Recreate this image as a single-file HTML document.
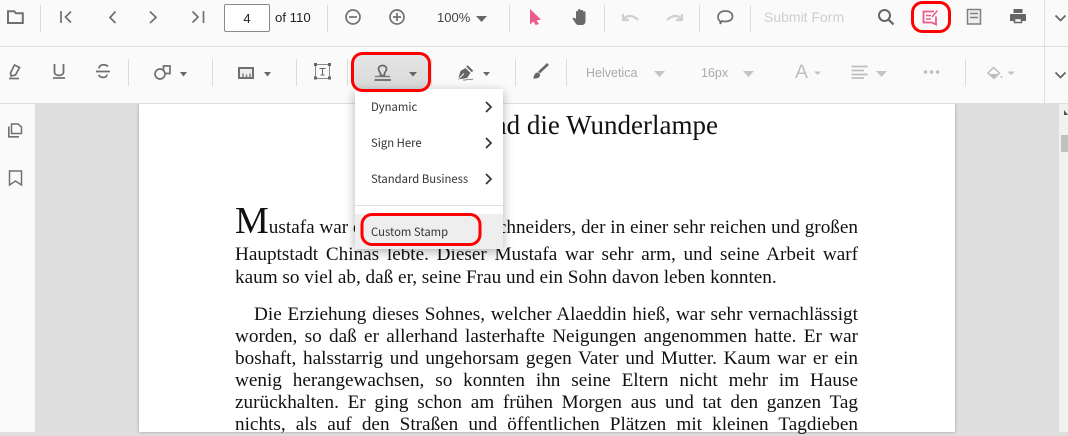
<!DOCTYPE html>
<html><head><meta charset="utf-8">
<style>
html,body{margin:0;padding:0;width:1068px;height:432px;overflow:hidden;background:#dedede;font-family:"Liberation Sans",sans-serif}
.a{position:absolute}
.tb{left:0;width:1068px;background:#fafafa}
.t{position:absolute;white-space:nowrap;font-size:13px;color:#444;line-height:16px}
.l{position:absolute;left:235px;width:623px;font-family:"Liberation Serif",serif;font-size:19.2px;line-height:22px;height:22px;color:#111;text-align:justify;text-align-last:justify;white-space:nowrap}
.m{position:absolute;left:371px;font-family:"Noto Sans CJK SC","Liberation Sans",sans-serif;font-size:11.3px;color:#333;line-height:14px;white-space:nowrap}
svg{position:absolute;left:0;top:0}
</style></head><body>
<div class="a" style="left:35px;top:104px;width:1024px;height:328px;background:#dedede"></div>
<div class="a" style="left:139px;top:104px;width:816px;height:328px;background:#fff;box-shadow:0 0 3px rgba(0,0,0,.3)"></div>
<div class="a" style="left:0;top:104px;width:35px;height:328px;background:#fafafa"></div>
<div class="a" style="left:1059px;top:104px;width:9px;height:328px;background:#f1f1f1"></div>
<div class="a" style="left:1061px;top:135px;width:7px;height:17px;background:#c1c1c1"></div>

<div class="a" style="left:300px;top:110px;width:418px;text-align:right;font-family:'Liberation Serif',serif;font-size:27px;line-height:30px;color:#111;white-space:nowrap">Aladdin und die Wunderlampe</div>
<div class="l" style="top:210px;text-align-last:left;width:auto"><span style="font-size:38px;line-height:22px">M</span>ustafa war der Sohn</div>
<div class="l" style="top:217px;left:400px;width:458px;text-align:right;text-align-last:right">Schneiders, der in einer sehr reichen und großen</div>
<div class="l" style="top:244px">Hauptstadt Chinas lebte. Dieser Mustafa war sehr arm, und seine Arbeit warf</div>
<div class="l" style="top:267px;text-align-last:left">kaum so viel ab, daß er, seine Frau und ein Sohn davon leben konnten.</div>
<div class="l" style="top:304px;left:254px;width:604px">Die Erziehung dieses Sohnes, welcher Alaeddin hieß, war sehr vernachlässigt</div>
<div class="l" style="top:326px">worden, so daß er allerhand lasterhafte Neigungen angenommen hatte. Er war</div>
<div class="l" style="top:348px">boshaft, halsstarrig und ungehorsam gegen Vater und Mutter. Kaum war er ein</div>
<div class="l" style="top:370px">wenig herangewachsen, so konnten ihn seine Eltern nicht mehr im Hause</div>
<div class="l" style="top:392px">zurückhalten. Er ging schon am frühen Morgen aus und tat den ganzen Tag</div>
<div class="l" style="top:414px">nichts, als auf den Straßen und öffentlichen Plätzen mit kleinen Tagdieben</div>

<div class="a tb" style="top:0;height:46px"></div>
<div class="a" style="left:0;top:46px;width:1068px;height:1px;background:#e0e0e0"></div>
<div class="a tb" style="top:47px;height:56px"></div>
<div class="a" style="left:0;top:103px;width:1068px;height:1px;background:#e0e0e0"></div>
<div class="a" style="left:1044px;top:0;width:1px;height:103px;background:#e0e0e0"></div>

<div class="a" style="left:352px;top:54px;width:77px;height:37px;background:linear-gradient(#e6e6e6,#d8d8d8);border-radius:8px"></div>

<div class="a" style="left:224px;top:4px;width:44px;height:26px;border:1px solid #8a8a8a;border-radius:2px;background:#fff;text-align:center;font-size:13px;line-height:27px;color:#222">4</div>
<div class="t" style="left:275px;top:10px;color:#222;font-size:13.2px">of 110</div>
<div class="t" style="left:437px;top:10px;color:#444">100%</div>
<div class="t" style="left:764px;top:9px;color:#cfcfcf;font-size:14px">Submit Form</div>
<div class="t" style="left:586px;top:65px;color:#ababab;font-size:12.5px">Helvetica</div>
<div class="t" style="left:701px;top:65px;color:#ababab;font-size:12.5px">16px</div>
<div class="t" style="left:795px;top:62px;color:#bdbdbd;font-size:19.5px;line-height:20px">A</div>

<div class="a" style="left:355px;top:89px;width:148px;height:160px;background:#fff;box-shadow:0 3px 10px rgba(0,0,0,.3)"></div>
<div class="a" style="left:355px;top:205px;width:148px;height:1px;background:#e0e0e0"></div>
<div class="a" style="left:355px;top:214px;width:148px;height:35px;background:#eee"></div>
<div class="m" style="top:100px">Dynamic</div>
<div class="m" style="top:136px">Sign Here</div>
<div class="m" style="top:172px">Standard Business</div>
<div class="m" style="top:225px">Custom Stamp</div>

<svg width="1068" height="432" viewBox="0 0 1068 432" fill="none">
<g stroke="#dcdcdc" stroke-width="1">
<path d="M40.500 5V32M327.500 5V32M509.500 5V32M604.500 5V32M699.500 5V32M750.500 5V32"/>
<path d="M128.500 59V86M212.500 59V86M296.500 59V86M347.500 59V86M431.500 59V86M515.500 59V86M566.500 59V86M965.500 59V86"/>
</g>
<g stroke="#707070" stroke-width="1.700">
<path d="M8 23V11.200h6l2 2h6.800V23z" stroke-width="2"/>
<path d="M61 11V23M71 11.500L65.500 17L71 22.500"/>
<path d="M115.500 11.500L110 17.500L115.500 23"/>
<path d="M150 11.500L156 17.500L150 23"/>
<path d="M192.500 11.500L198 17L192.500 22.500M203.500 11V23"/>
<circle cx="353" cy="17" r="7"/><path d="M349 17H357"/>
<circle cx="397" cy="17" r="7"/><path d="M393 17H401M397 13V21"/>
</g>
<path d="M476 16H487L481.500 22z" fill="#666"/>
<path d="M530 9L541 19.500L536.500 20.500L539 24L535.500 25L533.500 21.500L530 24.500z" fill="#ea5a8c"/>
<!-- hand -->
<path d="M572.500 18.500C573.500 17 575 18 576 19V12C576 10.500 578 10.500 578 12V10C578 8.800 580.500 8.800 580.500 10V11C580.500 9.500 583 9.500 583 11V12C583 11 585.500 11 585.500 12.500V21C585.500 23.500 584 25 582 25H578.500C577 25 576 24 575 22.500z" fill="#6a6a6a"/>
<path d="M623 21C625 15 632 14 638 20M623 14V20H629" stroke="#d0d0d0" stroke-width="2.200"/>
<path d="M682 21C680 15 673 14 667 20M682 14V20H676" stroke="#d0d0d0" stroke-width="2.200"/>
<!-- comment -->
<path d="M720.500 21.500C718.800 20.500 718 19 718 17C718 13.500 721 11 725.500 11C730 11 732.500 13.500 732.500 16.500C732.500 19.500 729.500 21.500 725.500 21.500C724 21.500 723 21.500 722 21L720.200 24z" stroke="#707070" stroke-width="1.700"/>
<circle cx="884.500" cy="15.500" r="5.500" stroke="#666" stroke-width="2"/>
<path d="M888.500 19.500L893.500 24.500" stroke="#666" stroke-width="2.200"/>
<!-- comment panel icon -->
<path d="M934 11.500H923.500V22.500H932L936 24.500V16.500" stroke="#ea5a8c" stroke-width="1.800"/>
<path d="M926 15.500H931M926 19H931M932 17L937.500 10.500" stroke="#ea5a8c" stroke-width="1.500"/>
<rect x="967.500" y="9.500" width="13" height="14.500" fill="#eee" stroke="#808080" stroke-width="1.500"/>
<path d="M970 13.500H978M970 17.500H978" stroke="#808080" stroke-width="1.500"/>
<path d="M1013.500 9H1022.500V13H1013.500z" fill="#666"/>
<path d="M1011 14Q1010 14 1010 15V21H1014V18H1022V21H1026V15Q1026 14 1025 14z" fill="#666"/>
<path d="M1014.500 18.500H1021.500V22.500H1014.500z" stroke="#666" stroke-width="1.500"/>
<path d="M1055.500 15.500L1060.500 20.500L1065.500 15.500M1055.500 72.500L1060.500 77.500L1065.500 72.500" stroke="#666" stroke-width="1.800"/>
<!-- row 2 icons -->
<g stroke="#707070" stroke-width="1.700">
<path d="M10.500 73L14.500 65L19.500 67.500L15.500 75L11 76z"/><path d="M9 78.500H19"/>
<path d="M54.500 64V72C54.500 76.500 63.500 76.500 63.500 72V64" stroke-width="1.800"/><path d="M53 78H65"/>
<path d="M96 71.500H110M108 66.500C105 63.500 99 64.500 99 68.500M98.500 75C101 78.500 107 78 107 74.500"/>
<circle cx="160" cy="74" r="5"/><path d="M163.500 70V66H170V73.500H165.500"/>
</g>
<path d="M180 72H187L183.500 76.500zM264 72H271L267.500 76.500zM409 72H417L413 76.500zM483 72H490L486.500 76z" fill="#666"/>
<path d="M239 68H253V78H239z" fill="#eee" stroke="#707070" stroke-width="2"/>
<path d="M243 77.500V73.500M246.500 77.500V74.500M250 77.500V73.500" stroke="#707070" stroke-width="1.300"/>
<rect x="315.500" y="64.500" width="14" height="14" stroke="#8a8a8a" stroke-width="1"/>
<path d="M319.500 68.500H325.500M322.500 68.500V75M320.500 75H324.500" stroke="#666" stroke-width="1"/>
<path d="M314 63h3v3h-3zM328 63h3v3h-3zM314 76.500h3v3h-3zM328 76.500h3v3h-3z" fill="#666"/>
<!-- stamp -->
<path d="M380.500 73.500C380.500 72 378.500 71.500 378.500 69C378.500 66.800 380.300 65.500 382.500 65.500C384.700 65.500 386.500 66.800 386.500 69C386.500 71.500 384.500 72 384.500 73.500V75.500H380.500z" stroke="#666" stroke-width="1.700"/>
<path d="M375 76.500H390" stroke="#777" stroke-width="1.400"/><path d="M374.500 80H391" stroke="#666" stroke-width="1.800"/>
<!-- pen -->
<path d="M458 79.500L460.500 71L465.500 68L470.500 73L467 78z" fill="#666"/>
<path d="M458.500 79L464 73.500" stroke="#fafafa" stroke-width="1"/>
<path d="M467 66L472.500 71.500" stroke="#666" stroke-width="2"/>
<path d="M463 80C466 80.500 468 78.500 470 79.500C471 80 472 79.500 473 79" stroke="#888" stroke-width="1"/>
<!-- brush -->
<path d="M539 72.500L548 64" stroke="#666" stroke-width="2.600"/>
<path d="M533.500 78.500C533.500 75 535.500 72.500 537.500 72.500C540 72.500 540.500 75.500 539.500 76.800C538 78.500 535.500 78.800 533.500 78.500z" fill="#666"/>
<path d="M654 71H665L659.500 77zM743 71H754L748.500 77zM814 71.500H821L817.500 75zM876 71H887L881.500 77zM1007 71.500H1015L1011 75z" fill="#c4c4c4"/>
<path d="M851.500 66.500H867.500M851.500 70.500H864M851.500 74.500H867.500M851.500 78H864" stroke="#bdbdbd" stroke-width="1.700"/>
<circle cx="925.500" cy="72" r="1.800" fill="#bdbdbd"/><circle cx="931.500" cy="72" r="1.800" fill="#bdbdbd"/><circle cx="937.500" cy="72" r="1.800" fill="#bdbdbd"/>
<path d="M988 73L993.500 67.500L999.500 73L994 78.500z" stroke="#bdbdbd" stroke-width="1.500"/>
<path d="M989 74H999L994 78.500z" fill="#bdbdbd"/><circle cx="1001.500" cy="77" r="1" fill="#bdbdbd"/>
<!-- sidebar -->
<path d="M11.500 124V133.500H21.500V127L18 124z" stroke="#707070" stroke-width="1.500"/>
<path d="M8.800 126.500V136.800H19" stroke="#707070" stroke-width="1.600"/>
<path d="M9.500 171H21.500V185L15.500 181L9.500 185z" stroke="#707070" stroke-width="1.500"/>
<!-- menu chevrons -->
<path d="M486 102L491 107L486 112M486 138L491 143L486 148M486 174L491 179L486 184" stroke="#333" stroke-width="1.700"/>
<path d="M1064 110L1068 115H1064z" fill="#505050"/>
<!-- red highlights -->
<rect x="912.500" y="2.500" width="37" height="29" rx="10" stroke="#f00" stroke-width="3"/>
<rect x="352.500" y="53.500" width="77" height="37" rx="10" stroke="#f00" stroke-width="3"/>
<rect x="362" y="214.500" width="118" height="30" rx="10" stroke="#f00" stroke-width="3"/>
</svg>
</body></html>
